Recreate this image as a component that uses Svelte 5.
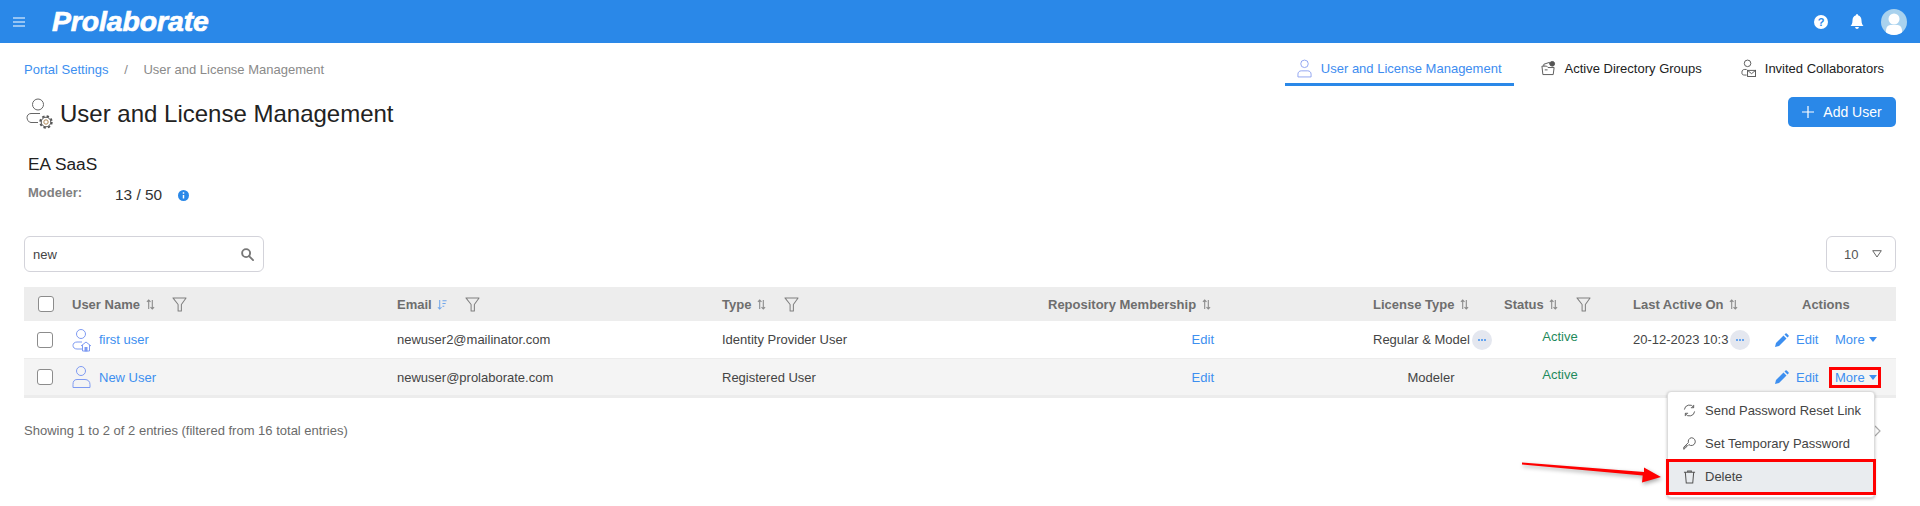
<script>
  const tabs = [
    { label: 'User and License Management', icon: 'user', active: true },
    { label: 'Active Directory Groups', icon: 'group', active: false },
    { label: 'Invited Collaborators', icon: 'invite', active: false }
  ];

  const users = [
    { name: 'first user', icon: 'home', email: 'newuser2@mailinator.com', type: 'Identity Provider User', license: 'Regular & Model', clipped: true, last: '20-12-2023 10:3' },
    { name: 'New User', icon: 'plain', email: 'newuser@prolaborate.com', type: 'Registered User', license: 'Modeler', clipped: false, last: '' }
  ];
</script>

{#snippet sortIcon()}
  <svg class="sort" viewBox="0 0 10 12" width="9" height="11" fill="none" stroke="#8a8a8a" stroke-width="1.2">
    <path d="M3 11V1M1 3l2-2 2 2" />
    <path d="M7 1v10M5 9l2 2 2-2" />
  </svg>
{/snippet}

{#snippet funnel()}
  <svg class="funnel" viewBox="0 0 16 16" width="15" height="15" fill="none" stroke="#808080" stroke-width="1.1">
    <path d="M1 1h14L10 8v7H6.500V8z" stroke-linejoin="round" />
  </svg>
{/snippet}

{#snippet pencil()}
  <svg viewBox="0 0 14 14" width="14" height="14" fill="#3d8ff0">
    <path d="M0 14l1-4 7.500-7.500 3 3L4 13zM9.500 1.500l1-1q.6-.5 1.200 0l1.800 1.800q.5.600 0 1.200l-1 1z" />
  </svg>
{/snippet}

{#snippet dots()}
  <span class="dots"><i></i><i></i><i></i></span>
{/snippet}

{#snippet caret()}
  <svg viewBox="0 0 8 5" width="8" height="5" fill="#3d8ff0"><path d="M0 0h8L4 5z" /></svg>
{/snippet}

<header class="topbar">
  <svg class="burger" viewBox="0 0 12 10" width="12" height="10" stroke="#fff" stroke-width="1.2">
    <path d="M0 1h12M0 5h12M0 9h12" />
  </svg>
  <span class="logo">Prolaborate</span>
  <div class="top-icons">
    <svg viewBox="0 0 14 14" width="14" height="14">
      <circle cx="7" cy="7" r="7" fill="#fff" />
      <text x="7" y="11" text-anchor="middle" class="q">?</text>
    </svg>
    <svg viewBox="0 0 14 15" width="14" height="15" fill="#fff">
      <path d="M7 0q1 0 1 1.300C10.500 2 11.500 4 11.500 6.500c0 3 1 4.500 2 5.500H.5c1-1 2-2.500 2-5.500C2.500 4 3.500 2 6 1.300 6 0 7 0 7 0zM5 13h4q-.5 2-2 2t-2-2z" />
    </svg>
    <span class="avatar">
      <svg viewBox="0 0 26 26" width="26" height="26" fill="#fff">
        <circle cx="13" cy="10" r="5.500" />
        <path d="M5 26v-4c0-4 2-6 5-6h6c3 0 5 2 5 6v4z" />
      </svg>
    </span>
  </div>
</header>

<main class="page">
  <div class="top-row">
    <nav class="crumbs">
      <a href="#portal">Portal Settings</a>
      <span class="sep">/</span>
      <span>User and License Management</span>
    </nav>
    <div class="tabs">
      {#each tabs as tab}
        <div class="tab" class:active={tab.active}>
          {#if tab.icon === 'user'}
            <svg viewBox="0 0 16 20" width="15" height="19" fill="none" stroke="#8ea2f0" stroke-width="1">
              <circle cx="8" cy="5" r="4" />
              <path d="M1 19v-3c0-2 1.500-3.500 3.500-3.500h7c2 0 3.500 1.500 3.500 3.500v3z" stroke-linejoin="round" />
            </svg>
          {:else if tab.icon === 'group'}
            <svg viewBox="0 0 16 16" width="15" height="16" fill="none" stroke="#555" stroke-width="1">
              <path d="M1 6h5l1.500 1.500H14L13 15H2z" fill="#fff" />
              <path d="M3 6V4l6-2 1 3" />
              <circle cx="12" cy="3.500" r="2.500" fill="#555" />
              <path d="M4 10h3" />
            </svg>
          {:else}
            <svg viewBox="0 0 16 20" width="15" height="19" fill="none" stroke="#555" stroke-width="1">
              <circle cx="7" cy="4.500" r="3.500" />
              <path d="M6 11H4c-2 0-3 1-3 3v1c0 1.500 1 2 3 2h2" />
              <rect x="7" y="12" width="8.500" height="6.500" fill="#fff" />
              <path d="M7 12l4.250 3.500L15.500 12" />
            </svg>
          {/if}
          <span>{tab.label}</span>
        </div>
      {/each}
    </div>
  </div>

  <div class="title-row">
    <div class="title">
      <svg viewBox="0 0 27 31" width="27" height="31" fill="none" stroke="#666" stroke-width="1">
        <circle cx="12" cy="6.500" r="5.500" />
        <path d="M14 15.500H5c-2.500 0-4 2-4 4s1.500 5 4 5h7" />
        <circle cx="20" cy="24" r="2.200" stroke="#b08a5a" />
        <circle cx="20" cy="24" r="4.800" stroke="#555" />
        <circle cx="20" cy="24" r="5.800" stroke-width="1.800" stroke-dasharray="2.400 2.150" stroke="#555" />
      </svg>
      <h1>User and License Management</h1>
    </div>
    <button class="add">
      <svg viewBox="0 0 12 12" width="12" height="12" stroke="#fff" stroke-width="1.200"><path d="M6 0v12M0 6h12" /></svg>
      Add User
    </button>
  </div>

  <h2 class="org">EA SaaS</h2>
  <div class="quota">
    <span class="quota-label">Modeler:</span>
    <span class="quota-val">13 / 50</span>
    <svg class="info" viewBox="0 0 12 12" width="11" height="11">
      <circle cx="6" cy="6" r="6" fill="#2a88e8" />
      <path d="M6 2.500v1.500M6 5.500v3.800" stroke="#fff" stroke-width="1.600" />
    </svg>
  </div>

  <div class="controls">
    <div class="search">
      <span>new</span>
      <svg viewBox="0 0 14 14" width="13" height="13" fill="none" stroke="#777" stroke-width="2">
        <circle cx="5.500" cy="5.500" r="4.300" />
        <path d="M8.700 8.700L13 13" stroke-linecap="round" />
      </svg>
    </div>
    <div class="page-size">
      <span>10</span>
      <svg viewBox="0 0 10 8" width="10" height="8" fill="none" stroke="#666"><path d="M.7.700h8.600L5 7z" /></svg>
    </div>
  </div>

  <table>
    <colgroup>
      <col style="width: 48px" />
      <col style="width: 325px" />
      <col style="width: 325px" />
      <col style="width: 326px" />
      <col style="width: 325px" />
      <col style="width: 131px" />
      <col style="width: 129px" />
      <col style="width: 142px" />
      <col />
    </colgroup>
    <thead>
      <tr>
        <th><span class="check head-check"></span></th>
        <th>User Name {@render sortIcon()} {@render funnel()}</th>
        <th>
          Email
          <svg class="sort" viewBox="0 0 10 12" width="10" height="11" fill="none" stroke="#6fa5ea" stroke-width="1.100">
            <path d="M2.500 1v10M.5 9l2 2 2-2M5.500 2H10M5.500 5H9M5.500 8H7.500" />
          </svg>
          {@render funnel()}
        </th>
        <th>Type {@render sortIcon()} {@render funnel()}</th>
        <th>Repository Membership {@render sortIcon()}</th>
        <th>License Type {@render sortIcon()}</th>
        <th>Status {@render sortIcon()} {@render funnel()}</th>
        <th>Last Active On {@render sortIcon()}</th>
        <th class="actions-head">Actions</th>
      </tr>
    </thead>
    <tbody>
      {#each users as user, i}
        <tr class:shaded={i === 1}>
          <td><span class="check"></span></td>
          <td>
            <span class="user-cell">
              <svg viewBox="0 0 20 24" width="20" height="24" fill="none" stroke="#7f9bf2" stroke-width="1">
                <circle cx="9" cy="6" r="4.500" />
                {#if user.icon === 'home'}
                  <path d="M10 14H5c-2.500 0-4 1.500-4 3.500S2.500 21 5 21h5" />
                  <path d="M9 18l5-4 5 4M10.500 17v6h7v-6" fill="#fff" />
                  <rect x="13" y="19.500" width="2" height="3.500" fill="#7f9bf2" />
                {:else}
                  <path d="M5 14.500h8c3 0 5 2 5 5v3H1v-3c0-3 1-5 4-5z" stroke-linejoin="round" />
                {/if}
              </svg>
              <a href="#user">{user.name}</a>
            </span>
          </td>
          <td>{user.email}</td>
          <td>{user.type}</td>
          <td class="repo"><a href="#edit">Edit</a></td>
          <td>
            {#if user.clipped}
              <span class="clipped">{user.license}{@render dots()}</span>
            {:else}
              <span class="center-license">{user.license}</span>
            {/if}
          </td>
          <td><span class="status">Active</span></td>
          <td>
            {#if user.last}
              <span class="clipped">{user.last}{@render dots()}</span>
            {/if}
          </td>
          <td>
            <span class="actions">
              <a class="edit" href="#edit">{@render pencil()} Edit</a>
              <span class="more" class:boxed={i === 1}>
                <a href="#more">More</a>{@render caret()}
                {#if i === 1}
                  <div class="menu">
                    <div class="menu-item">
                      <svg viewBox="0 0 14 14" width="13" height="13" fill="none" stroke="#555" stroke-width="1">
                        <path d="M1.500 6A5.500 5.500 0 0 1 11.500 3.500M12.500 8A5.500 5.500 0 0 1 2.500 10.500" />
                        <path d="M11.500 1v3H8.500M2.500 13v-3h3" />
                      </svg>
                      Send Password Reset Link
                    </div>
                    <div class="menu-item">
                      <svg viewBox="0 0 14 14" width="13" height="13" fill="none" stroke="#555" stroke-width="1">
                        <path d="M9 .8a4.200 4.200 0 1 1-2.700 7.400L5 9.500H3.500V11H2v1.500L.8 13.200V11L5.800 6A4.200 4.200 0 0 1 9 .8z" stroke-linejoin="round" />
                      </svg>
                      Set Temporary Password
                    </div>
                    <div class="menu-item selected">
                      <svg viewBox="0 0 14 15" width="13" height="14" fill="none" stroke="#555" stroke-width="1.100">
                        <path d="M1 2.500h12M5 2.500V1h4v1.500M2.500 2.500L3.500 14h7l1-11.500" />
                      </svg>
                      Delete
                    </div>
                    <svg class="arrow" viewBox="0 0 140 24" width="140" height="24">
                      <path d="M0 1.500l122 9.500 0-4.500 17 9.500-19 5.500 .7-7L0 3.500z" fill="#f00" />
                    </svg>
                  </div>
                {/if}
              </span>
            </span>
          </td>
        </tr>
      {/each}
    </tbody>
  </table>

  <div class="table-foot">
    <span>Showing 1 to 2 of 2 entries (filtered from 16 total entries)</span>
    <svg viewBox="0 0 7 12" width="7" height="12" fill="none" stroke="#aaa" stroke-width="1.200"><path d="M1 1l5 5-5 5" /></svg>
  </div>
</main>

<style>
  :global(body) {
    margin: 0;
    background: #fff;
    font-family: "Liberation Sans", Arial, sans-serif;
    font-size: 13px;
    color: #444;
  }

  a {
    color: #3d8ff0;
    text-decoration: none;
  }

  .topbar {
    display: flex;
    align-items: center;
    height: 43px;
    padding: 0 13px;
    background: #2a88e8;
  }

  .logo {
    margin-left: 27px;
    color: #fff;
    font-size: 28.400px;
    font-weight: 700;
    font-style: italic;
    letter-spacing: -0.100px;
    -webkit-text-stroke: 0.700px #fff;
  }

  .top-icons {
    display: flex;
    align-items: center;
    gap: 22px;
    margin-left: auto;
  }

  .q {
    font-size: 11px;
    font-weight: 700;
    fill: #2a88e8;
  }

  .avatar {
    display: block;
    width: 26px;
    height: 26px;
    margin-left: -5px;
    border-radius: 50%;
    overflow: hidden;
    background: #a9d2ee;
  }

  .avatar svg {
    display: block;
  }

  .page {
    box-sizing: border-box;
    min-height: 463px;
    padding: 0 24px;
  }

  .top-row {
    display: flex;
    justify-content: space-between;
    height: 42px;
  }

  .crumbs {
    padding-top: 19px;
    color: #8a8a8a;
  }

  .sep {
    margin: 0 12px;
  }

  .tabs {
    display: flex;
  }

  .tab {
    display: flex;
    align-items: center;
    gap: 9px;
    height: 30px;
    padding: 10px 12px 0;
    margin-left: 15px;
    border-bottom: 3px solid transparent;
    color: #222;
  }

  .tab.active {
    color: #3d8cf0;
    border-bottom-color: #2a88e8;
  }

  .title-row {
    display: flex;
    justify-content: space-between;
    align-items: flex-start;
    margin-top: 12px;
  }

  .title {
    display: flex;
    align-items: center;
    gap: 7px;
    margin-left: 2px;
    margin-top: 1px;
  }

  h1 {
    margin: 0;
    font-size: 24px;
    font-weight: 400;
    color: #222;
  }

  .add {
    display: flex;
    align-items: center;
    justify-content: center;
    gap: 9px;
    width: 108px;
    height: 30px;
    border: 0;
    border-radius: 5px;
    background: #2a88e8;
    color: #fff;
    font: inherit;
    font-size: 14px;
  }

  .org {
    margin: 25px 0 0 4px;
    font-size: 17.300px;
    font-weight: 400;
    line-height: 20px;
    color: #222;
  }

  .quota {
    display: flex;
    align-items: center;
    margin: 10px 0 0 4px;
    height: 20px;
  }

  .quota-label {
    width: 87px;
    padding-bottom: 3px;
    font-size: 13px;
    font-weight: 700;
    color: #808080;
  }

  .quota-val {
    width: 63px;
    padding-top: 2px;
    font-size: 15.400px;
    color: #333;
  }

  .info {
    margin-top: 2px;
  }

  .controls {
    display: flex;
    justify-content: space-between;
    margin-top: 32px;
  }

  .search,
  .page-size {
    display: flex;
    align-items: center;
    box-sizing: border-box;
    height: 36px;
    border: 1px solid #d3d3da;
    border-radius: 6px;
    background: #fff;
  }

  .search {
    justify-content: space-between;
    width: 240px;
    padding: 0 9px 0 8px;
    color: #444;
  }

  .page-size {
    gap: 14px;
    width: 70px;
    padding-left: 17px;
    font-size: 13px;
    color: #555;
  }

  table {
    width: 1872px;
    margin-top: 15px;
    border-collapse: collapse;
    table-layout: fixed;
    border-bottom: 3px solid #ececec;
  }

  th {
    height: 34px;
    padding: 0;
    background: #ededed;
    color: #6e6e6e;
    font-size: 13px;
    font-weight: 700;
    text-align: left;
    white-space: nowrap;
  }

  td {
    height: 37px;
    padding: 0;
    white-space: nowrap;
  }

  tbody tr:first-child td {
    border-bottom: 1px solid #ececec;
  }

  tr.shaded td {
    height: 36px;
    background: #f4f4f4;
  }

  .sort {
    margin-left: 2px;
    vertical-align: -1px;
  }

  .funnel {
    margin-left: 14px;
    vertical-align: -3px;
  }

  .check {
    display: block;
    box-sizing: border-box;
    width: 16px;
    height: 16px;
    margin-left: 13px;
    border: 1px solid #8c8c8c;
    border-radius: 3px;
    background: #fff;
  }

  .head-check {
    margin-left: 14px;
  }

  .user-cell {
    display: flex;
    align-items: center;
    gap: 7px;
  }

  .repo {
    padding-right: 159px;
    text-align: right;
  }

  .clipped {
    display: flex;
    align-items: center;
    gap: 2px;
  }

  .center-license {
    display: block;
    width: 116px;
    text-align: center;
  }

  .dots {
    display: inline-flex;
    align-items: center;
    justify-content: center;
    gap: 1px;
    width: 20px;
    height: 20px;
    border-radius: 50%;
    background: #e4e7ef;
  }

  .dots i {
    width: 2px;
    height: 2px;
    border-radius: 50%;
    background: #3d8ff0;
  }

  .status {
    display: block;
    width: 112px;
    padding-bottom: 6px;
    color: #1f8a5c;
    font-size: 13px;
    text-align: center;
  }

  .actions-head {
    padding-left: 27px;
  }

  .actions {
    display: flex;
    align-items: center;
  }

  .edit {
    display: flex;
    align-items: center;
    gap: 7px;
    width: 54px;
  }

  .more {
    position: relative;
    display: flex;
    align-items: center;
    gap: 4px;
    box-sizing: border-box;
    width: 52px;
    height: 21px;
    padding-left: 3px;
    border: 3px solid transparent;
  }

  .more.boxed {
    border-color: #f00;
  }

  .menu {
    position: absolute;
    top: 21px;
    right: 3px;
    z-index: 2;
    box-sizing: border-box;
    width: 208px;
    padding-top: 2px;
    border: 1px solid #dcdcdc;
    border-radius: 4px;
    background: #fff;
    box-shadow: 0 1px 3px rgba(0, 0, 0, 0.25);
    color: #444;
  }

  .menu-item {
    display: flex;
    align-items: center;
    gap: 9px;
    height: 33px;
    padding-left: 15px;
  }

  .menu-item.selected {
    box-sizing: border-box;
    height: 36px;
    margin: -1px -2px 2px -2px;
    padding-left: 14px;
    border: 3px solid #f00;
    background: #e9ecef;
  }

  .arrow {
    position: absolute;
    left: -146px;
    top: 69px;
    filter: drop-shadow(1px 2px 2px rgba(0, 0, 0, 0.35));
  }

  .table-foot {
    display: flex;
    justify-content: space-between;
    align-items: center;
    margin-top: 25px;
    padding-right: 15px;
    color: #6b6b6b;
    font-size: 13px;
  }
</style>
